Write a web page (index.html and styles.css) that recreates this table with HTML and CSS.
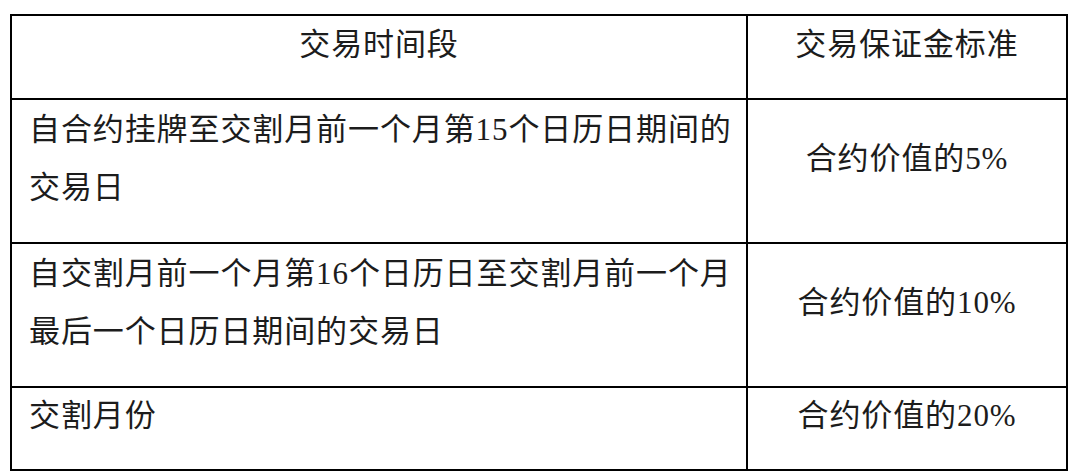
FILE: index.html
```html
<!DOCTYPE html>
<html lang="zh-CN">
<head>
<meta charset="utf-8">
<title>交易保证金标准</title>
<link rel="stylesheet" href="styles.css">
</head>
<body>
<div class="page">
  <div class="grid">
    <div class="cell center">交易时间段</div>
    <div class="cell center">交易保证金标准</div>
    <div class="cell left">自合约挂牌至交割月前一个月第15个日历日期间的<br>交易日</div>
    <div class="cell center">合约价值的5%</div>
    <div class="cell left">自交割月前一个月第16个日历日至交割月前一个月<br>最后一个日历日期间的交易日</div>
    <div class="cell center">合约价值的10%</div>
    <div class="cell left">交割月份</div>
    <div class="cell center">合约价值的20%</div>
  </div>
</div>
</body>
</html>
```

FILE: styles.css
```css
html, body {
  margin: 0;
  padding: 0;
  background: #ffffff;
}

.page {
  padding: 14px 6px 0 10px;
}

.grid {
  display: grid;
  grid-template-columns: 734px 318px;
  grid-template-rows: 82px 142px 142px 81px;
  gap: 2px;
  padding: 2px;
  width: 1054px;
  background: #000000;
  font-family: "Liberation Serif", "Noto Sans CJK SC", serif;
  font-size: 31px;
  letter-spacing: 0.9px;
  line-height: 58px;
  color: #1c1c1c;
}

.cell {
  background: #ffffff;
  display: flex;
  align-items: center;
  padding-bottom: 25px;
  box-sizing: border-box;
  white-space: nowrap;
}

.center {
  justify-content: center;
  text-align: center;
}

.left {
  justify-content: flex-start;
  padding-left: 17px;
}
```
